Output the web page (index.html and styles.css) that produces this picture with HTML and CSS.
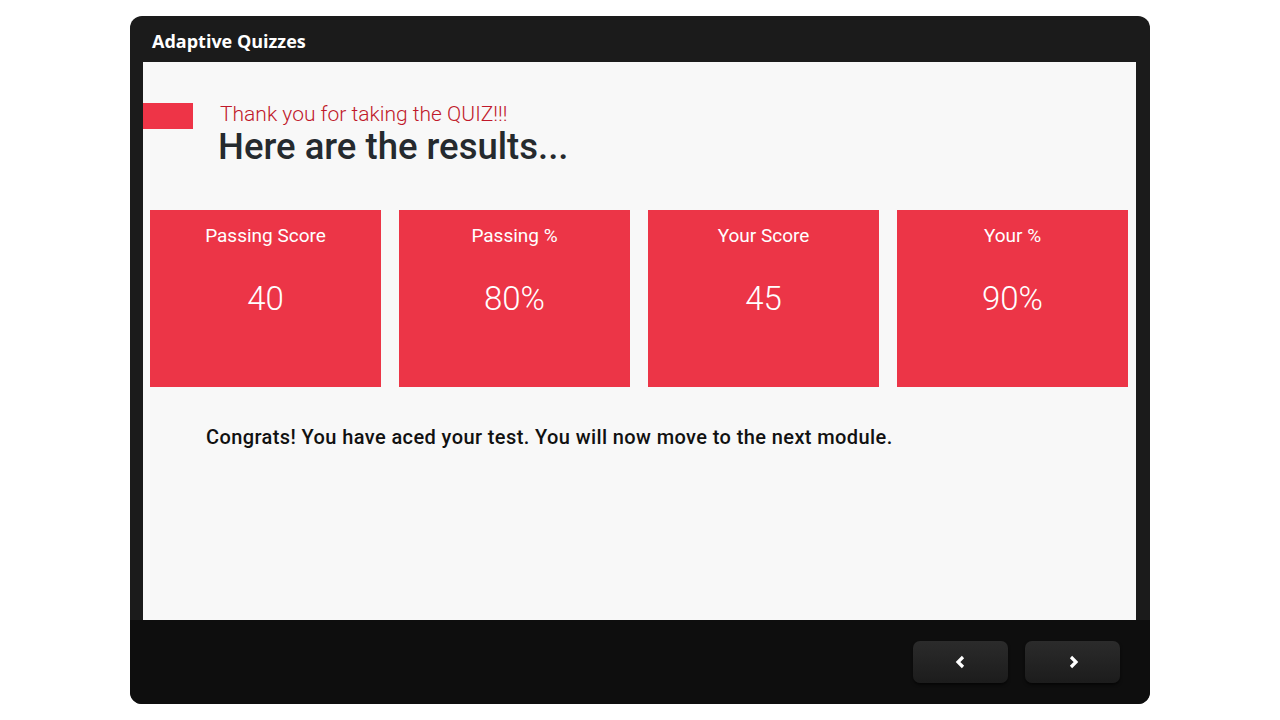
FILE: index.html
```html
<!DOCTYPE html>
<html>
<head>
<meta charset="utf-8">
<link rel="stylesheet" href="styles.css">
</head>
<body>
<div class="frame">
  <div class="titlebar">Adaptive Quizzes</div>
  <div class="stage">
    <div class="intro">
      <div class="marker"></div>
      <div class="headings">
        <div class="sub">Thank you for taking the QUIZ!!!</div>
        <h1 class="head">Here are the results...</h1>
      </div>
    </div>
    <div class="cards">
      <div class="card"><div class="label">Passing Score</div><div class="value">40</div></div>
      <div class="card"><div class="label">Passing %</div><div class="value">80%</div></div>
      <div class="card"><div class="label">Your Score</div><div class="value">45</div></div>
      <div class="card"><div class="label">Your %</div><div class="value">90%</div></div>
    </div>
    <p class="msg">Congrats! You have aced your test. You will now move to the next module.</p>
  </div>
  <div class="footer">
    <button class="nav">
      <svg width="12" height="14" viewBox="0 0 12 14"><polyline points="8,2 3,7 8,12" fill="none" stroke="#fff" stroke-width="3.2" stroke-linejoin="miter"/></svg>
    </button>
    <button class="nav">
      <svg width="12" height="14" viewBox="0 0 12 14"><polyline points="4,2 9,7 4,12" fill="none" stroke="#fff" stroke-width="3.2" stroke-linejoin="miter"/></svg>
    </button>
  </div>
</div>
</body>
</html>
```
FILE: styles.css
```css
* { box-sizing: border-box; }
html, body { margin: 0; padding: 0; background: #ffffff; }
body { width: 1280px; height: 720px; overflow: hidden; }

.frame {
  width: 1020px;
  height: 688px;
  margin: 16px 0 0 130px;
  border-radius: 12px;
  background: #1b1b1b;
  display: flex;
  flex-direction: column;
  overflow: hidden;
}

.titlebar {
  height: 46px;
  padding: 13px 0 0 22px;
  color: #ffffff;
  font-family: "Open Sans", sans-serif;
  font-weight: 700;
  font-size: 18px;
  line-height: 24px;
}

.stage {
  margin: 0 14px 0 13px;
  height: 558px;
  background: #f8f8f8;
  padding: 41px 8px 0 7px;
}

.intro {
  display: flex;
  align-items: flex-start;
  margin-left: -7px;
}
.marker {
  width: 50px;
  height: 26px;
  background: #ee3447;
}
.headings { margin-left: 27px; margin-top: -1px; }
.sub {
  font-family: "Roboto", sans-serif;
  font-weight: 300;
  font-size: 21px;
  line-height: 24px;
  color: #c0182b;
}
.head {
  margin: 0 0 0 -2px;
  font-family: "Roboto", sans-serif;
  font-weight: 500;
  font-size: 36.5px;
  line-height: 42px;
  color: #252a2e;
}

.cards {
  margin-top: 42px;
  display: grid;
  grid-template-columns: repeat(4, 231px);
  gap: 18px;
}
.card {
  height: 177px;
  background: #ec3547;
  color: #ffffff;
  text-align: center;
  font-family: "Roboto", sans-serif;
}
.label {
  padding-top: 14px;
  font-size: 19px;
  line-height: 24px;
  font-weight: 400;
}
.value {
  margin-top: 32px;
  font-size: 33px;
  line-height: 38px;
  font-weight: 300;
}

.msg {
  margin: 38px 0 0 56px;
  font-family: "Roboto", sans-serif;
  font-weight: 500;
  font-size: 20px;
  letter-spacing: 0.4px;
  line-height: 24px;
  color: #111111;
}

.footer {
  flex: 1;
  background: #0e0e0e;
  display: flex;
  justify-content: flex-end;
  align-items: flex-start;
  gap: 17px;
  padding: 21px 30px 0 0;
}
.nav {
  width: 95px;
  height: 42px;
  border: none;
  border-radius: 7px;
  background: linear-gradient(#2b2b2b, #1c1c1c);
  box-shadow: 0 2px 3px rgba(0,0,0,0.6);
  display: flex;
  align-items: center;
  justify-content: center;
  padding: 0;
}
.nav svg { display: block; }
```
